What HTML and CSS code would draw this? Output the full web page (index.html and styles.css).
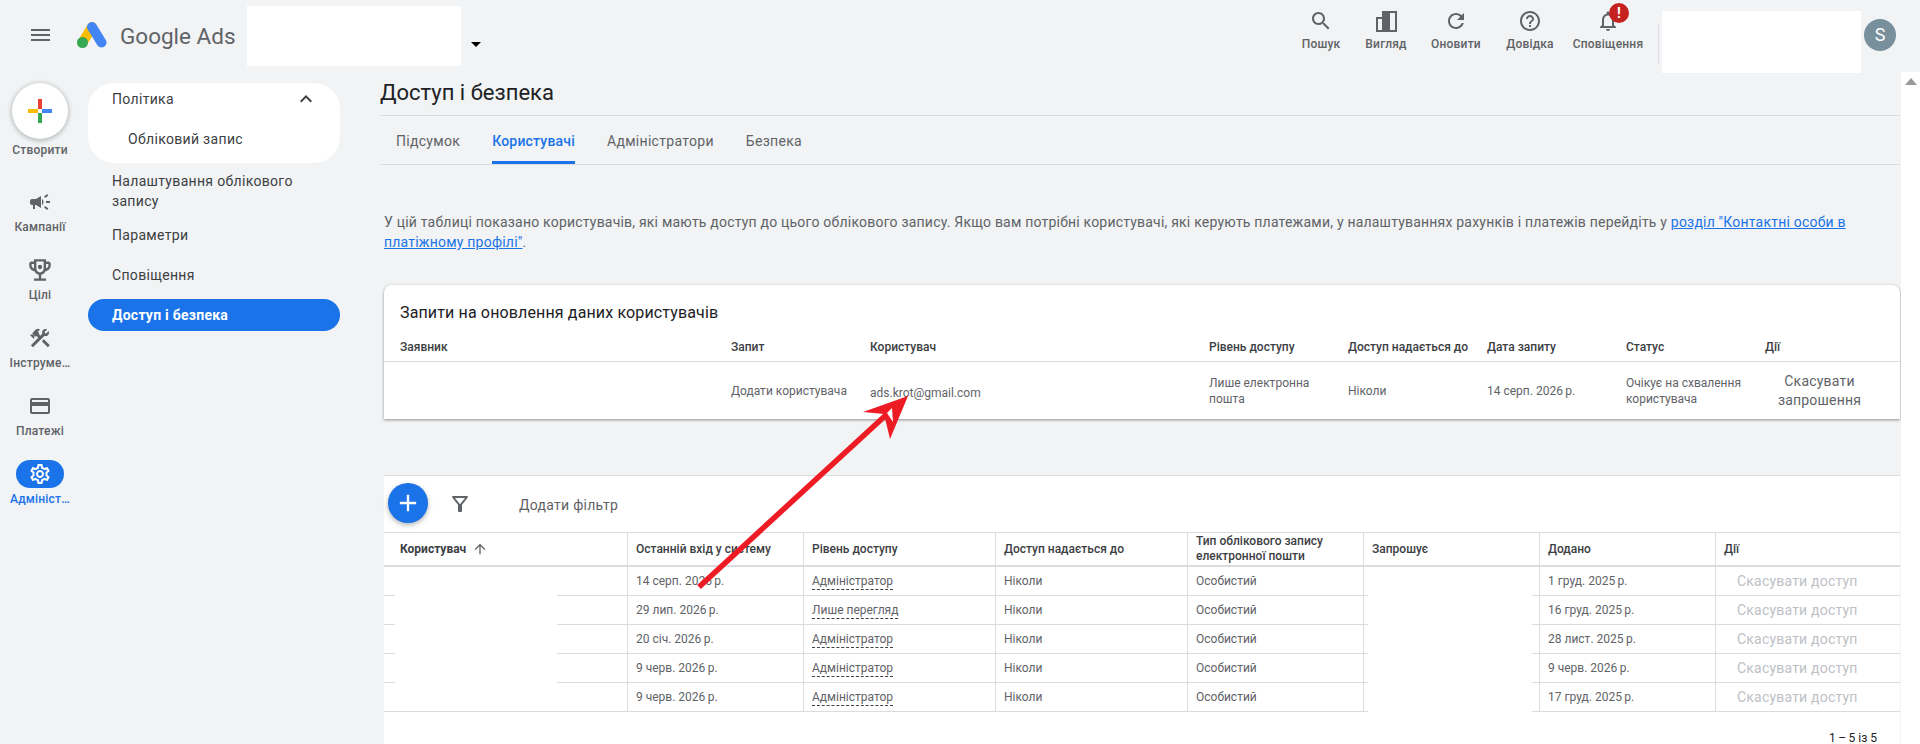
FILE: index.html
```html
<!DOCTYPE html>
<html lang="uk">
<head>
  <meta charset="UTF-8" />
  <title>Доступ і безпека</title>
  <link rel="stylesheet" href="styles.css">
</head>
<body>
  <header class="topbar">
    <svg class="menu-icon" viewBox="0 0 19 12"><path d="M0 0h19v2H0zM0 5h19v2H0zM0 10h19v2H0z"/></svg>
    <svg class="logo" viewBox="0 0 30 27">
      <path d="M15 6L5.5 21.5" stroke="#fbbc04" stroke-width="10" stroke-linecap="round"/>
      <circle cx="5.5" cy="21.5" r="5.5" fill="#34a853"/>
      <path d="M15 6l9.5 15.5" stroke="#4285f4" stroke-width="10" stroke-linecap="round"/>
    </svg>
    <span class="brand">Google Ads</span>
    <div class="redact account-box"></div>
    <span class="caret"></span>
    <div class="tools">
      <div class="tool tool-search">
        <svg viewBox="0 0 24 24"><path d="M15.5 14h-.79l-.28-.27C15.41 12.59 16 11.11 16 9.5 16 5.91 13.09 3 9.5 3S3 5.91 3 9.5 5.91 16 9.5 16c1.61 0 3.09-.59 4.23-1.57l.27.28v.79l5 4.99L20.49 19l-4.99-5zm-6 0C7.01 14 5 11.99 5 9.5S7.01 5 9.5 5 14 7.01 14 9.5 11.99 14 9.5 14z"/></svg>
        <span>Пошук</span>
      </div>
      <div class="tool tool-view">
        <svg viewBox="0 0 24 24"><path d="M2 8h6V2h15v21H2zm2 2v11h4V10zm12-6v17h5V4z"/><path d="M9 4h1v5h5v12H9z"/></svg>
        <span>Вигляд</span>
      </div>
      <div class="tool tool-refresh">
        <svg viewBox="0 0 24 24"><path d="M17.65 6.35C16.2 4.9 14.21 4 12 4c-4.42 0-7.99 3.58-7.99 8s3.57 8 7.99 8c3.73 0 6.84-2.55 7.73-6h-2.08c-.82 2.33-3.04 4-5.65 4-3.31 0-6-2.69-6-6s2.69-6 6-6c1.66 0 3.14.69 4.22 1.78L13 11h7V4l-2.35 2.35z"/></svg>
        <span>Оновити</span>
      </div>
      <div class="tool tool-help">
        <svg viewBox="0 0 24 24"><path d="M11 18h2v-2h-2v2zm1-16C6.48 2 2 6.48 2 12s4.48 10 10 10 10-4.48 10-10S17.52 2 12 2zm0 18c-4.41 0-8-3.59-8-8s3.59-8 8-8 8 3.59 8 8-3.59 8-8 8zm0-14c-2.21 0-4 1.79-4 4h2c0-1.1.9-2 2-2s2 .9 2 2c0 2-3 1.75-3 5h2c0-2.25 3-2.5 3-5 0-2.21-1.79-4-4-4z"/></svg>
        <span>Довідка</span>
      </div>
      <div class="tool tool-bell">
        <svg viewBox="0 0 24 24"><path d="M12 22c1.1 0 2-.9 2-2h-4c0 1.1.9 2 2 2zm6-6v-5c0-3.07-1.63-5.64-4.5-6.32V4c0-.83-.67-1.5-1.5-1.5s-1.5.67-1.5 1.5v.68C7.64 5.36 6 7.92 6 11v5l-2 2v1h16v-1l-2-2zm-2 1H8v-6c0-2.48 1.51-4.5 4-4.5s4 2.02 4 4.5v6z"/></svg>
        <span>Сповіщення</span>
        <b class="badge">!</b>
      </div>
    </div>
    <div class="tool-sep"></div>
    <div class="redact user-box"></div>
    <div class="avatar">S</div>
  </header>

  <div class="layout">
    <nav class="rail">
      <div class="create">
        <div class="create-btn">
          <svg viewBox="0 0 24 24">
            <path d="M10 0h4v10h-4z" fill="#ea4335"/>
            <path d="M14 10h10v4H14z" fill="#4285f4"/>
            <path d="M10 14h4v10h-4z" fill="#34a853"/>
            <path d="M0 10h10v4H0z" fill="#fbbc04"/>
          </svg>
        </div>
        <span>Створити</span>
      </div>
      <div class="rail-item">
        <svg viewBox="0 0 24 24"><path d="M18 11v2h4v-2h-4zm-2 6.61c.96.71 2.21 1.65 3.2 2.39.4-.53.8-1.07 1.2-1.6-.99-.74-2.24-1.68-3.2-2.4-.4.54-.8 1.08-1.2 1.61zM20.4 5.6c-.4-.53-.8-1.07-1.2-1.6-.99.74-2.24 1.68-3.2 2.4.4.53.8 1.07 1.2 1.6.96-.72 2.21-1.65 3.2-2.4zM4 9c-1.1 0-2 .9-2 2v2c0 1.1.9 2 2 2h1v4h2v-4h1l5 3V6L8 9H4zm11.5 3c0-1.33-.58-2.53-1.5-3.35v6.69c.92-.81 1.5-2.01 1.5-3.34z"/></svg>
        <span>Кампанії</span>
      </div>
      <div class="rail-item">
        <svg viewBox="2 2 20 20"><path d="M19 5h-2V3H7v2H5c-1.1 0-2 .9-2 2v1c0 2.55 1.92 4.63 4.39 4.94.63 1.5 1.98 2.63 3.61 2.96V19H7v2h10v-2h-4v-3.1c1.63-.33 2.98-1.46 3.61-2.96C19.08 12.63 21 10.55 21 8V7c0-1.1-.9-2-2-2zM5 8V7h2v3.82C5.84 10.4 5 9.3 5 8zm7 6c-1.65 0-3-1.35-3-3V5h6v6c0 1.65-1.35 3-3 3zm7-6c0 1.3-.84 2.4-2 2.82V7h2v1z"/><circle cx="12" cy="9.5" r="1.8"/></svg>
        <span>Цілі</span>
      </div>
      <div class="rail-item">
        <svg viewBox="0 0 24 24"><path d="M13.78 15.3L19.78 21.3L21.89 19.14L15.89 13.14L13.78 15.3ZM17.5 10.1C17.11 10.1 16.69 10.05 16.36 9.91L4.97 21.25L2.86 19.14L10.27 11.74L8.5 9.96L7.78 10.66L6.33 9.25V12.11L5.63 12.81L2.11 9.25L2.81 8.55H5.62L4.22 7.14L7.78 3.58C8.95 2.41 10.83 2.41 12 3.58L9.89 5.74L11.3 7.14L10.59 7.85L12.38 9.63L14.2 7.75C14.06 7.42 14 7 14 6.63C14 4.66 15.56 3.11 17.5 3.11C18.09 3.11 18.61 3.25 19.08 3.53L16.41 6.2L17.91 7.7L20.58 5.03C20.86 5.5 21 6 21 6.63C21 8.55 19.45 10.1 17.5 10.1Z"/></svg>
        <span>Інструме…</span>
      </div>
      <div class="rail-item">
        <svg viewBox="0 0 24 24"><path d="M20 4H4c-1.11 0-1.99.89-1.99 2L2 18c0 1.11.89 2 2 2h16c1.11 0 2-.89 2-2V6c0-1.11-.89-2-2-2zm0 14H4v-6h16v6zm0-10H4V6h16v2z"/></svg>
        <span>Платежі</span>
      </div>
      <div class="rail-item rail-active">
        <div class="rail-pill">
          <svg viewBox="0 0 24 24"><path d="M19.43 12.98c.04-.32.07-.64.07-.98 0-.34-.03-.66-.07-.98l2.11-1.65c.19-.15.24-.42.12-.64l-2-3.46c-.09-.16-.26-.25-.44-.25-.06 0-.12.01-.17.03l-2.49 1c-.52-.4-1.08-.73-1.69-.98l-.38-2.65C14.46 2.18 14.25 2 14 2h-4c-.25 0-.46.18-.49.42l-.38 2.65c-.61.25-1.17.59-1.69.98l-2.49-1c-.06-.02-.12-.03-.18-.03-.17 0-.34.09-.43.25l-2 3.46c-.13.22-.07.49.12.64l2.11 1.65c-.04.32-.07.65-.07.98 0 .33.03.66.07.98l-2.11 1.65c-.19.15-.24.42-.12.64l2 3.46c.09.16.26.25.44.25.06 0 .12-.01.17-.03l2.49-1c.52.4 1.08.73 1.69.98l.38 2.65c.03.24.24.42.49.42h4c.25 0 .46-.18.49-.42l.38-2.65c.61-.25 1.17-.59 1.69-.98l2.49 1c.06.02.12.03.18.03.17 0 .34-.09.43-.25l2-3.46c.12-.22.07-.49-.12-.64l-2.11-1.65zm-1.98-1.71c.04.31.05.52.05.73 0 .21-.02.43-.05.73l-.14 1.13.89.7 1.08.84-.7 1.21-1.27-.51-1.04-.42-.9.68c-.43.32-.84.56-1.25.73l-1.06.43-.16 1.13-.2 1.35h-1.4l-.19-1.35-.16-1.13-1.06-.43c-.43-.18-.83-.41-1.23-.71l-.91-.7-1.06.43-1.27.51-.7-1.21 1.08-.84.89-.7-.14-1.13c-.03-.31-.05-.54-.05-.74s.02-.43.05-.73l.14-1.13-.89-.7-1.08-.84.7-1.21 1.27.51 1.04.42.9-.68c.43-.32.84-.56 1.25-.73l1.06-.43.16-1.13.2-1.35h1.39l.19 1.35.16 1.13 1.06.43c.43.18.83.41 1.23.71l.91.7 1.06-.43 1.27-.51.7 1.21-1.07.85-.89.7.14 1.13zM12 8c-2.21 0-4 1.79-4 4s1.79 4 4 4 4-1.79 4-4-1.79-4-4-4zm0 6c-1.1 0-2-.9-2-2s.9-2 2-2 2 .9 2 2-.9 2-2 2z"/></svg>
        </div>
        <span>Адмініст…</span>
      </div>
    </nav>

    <aside class="subnav">
      <div class="subnav-group">
        <div class="subnav-row subnav-head">
          Політика
          <svg class="chevron" viewBox="0 0 24 24"><path d="M12 8l-6 6 1.41 1.41L12 10.83l4.59 4.58L18 14z"/></svg>
        </div>
        <div class="subnav-row subnav-child">Обліковий запис</div>
      </div>
      <div class="subnav-row subnav-double">Налаштування облікового запису</div>
      <div class="subnav-row">Параметри</div>
      <div class="subnav-row">Сповіщення</div>
      <div class="subnav-row subnav-active">Доступ і безпека</div>
    </aside>

    <main class="content">
      <h1 class="page-title">Доступ і безпека</h1>
      <div class="tabs">
        <div class="tab">Підсумок</div>
        <div class="tab tab-active">Користувачі</div>
        <div class="tab">Адміністратори</div>
        <div class="tab">Безпека</div>
      </div>

      <p class="intro">У цій таблиці показано користувачів, які мають доступ до цього облікового запису. Якщо вам потрібні користувачі, які керують платежами, у налаштуваннях рахунків і платежів перейдіть у <a href="#">розділ "Контактні особи в платіжному профілі"</a>.</p>

      <section class="card">
        <h2 class="card-title">Запити на оновлення даних користувачів</h2>
        <table class="req-table">
          <thead>
            <tr>
              <th>Заявник</th><th>Запит</th><th>Користувач</th><th>Рівень доступу</th><th>Доступ надається до</th><th>Дата запиту</th><th>Статус</th><th>Дії</th>
            </tr>
          </thead>
          <tbody>
            <tr>
              <td></td>
              <td>Додати користувача</td>
              <td class="email">ads.krot@gmail.com</td>
              <td>Лише електронна пошта</td>
              <td>Ніколи</td>
              <td>14 серп. 2026&thinsp;р.</td>
              <td>Очікує на схвалення користувача</td>
              <td class="req-cancel">Скасувати запрошення</td>
            </tr>
          </tbody>
        </table>
      </section>

      <section class="users">
        <div class="users-bar">
          <div class="fab"><svg viewBox="0 0 24 24"><path d="M19 13h-6v6h-2v-6H5v-2h6V5h2v6h6v2z"/></svg></div>
          <svg class="filter-icon" viewBox="0 0 24 24"><path d="M7 6h10l-5.01 6.3L7 6zm-2.75-.39C6.27 8.2 10 13 10 13v6c0 .55.45 1 1 1h2c.55 0 1-.45 1-1v-6s3.72-4.8 5.74-7.39c.51-.66.04-1.61-.79-1.61H5.04c-.83 0-1.3.95-.79 1.61z"/></svg>
          <span class="add-filter">Додати фільтр</span>
        </div>
        <table class="users-table">
          <thead>
            <tr>
              <th class="user-col">Користувач <svg class="sort-icon" viewBox="0 0 24 24"><path d="M4 12l1.41 1.41L11 7.83V20h2V7.83l5.58 5.59L20 12l-8-8-8 8z"/></svg></th>
              <th>Останній вхід у систему</th><th>Рівень доступу</th><th>Доступ надається до</th><th>Тип облікового запису електронної пошти</th><th>Запрошує</th><th>Додано</th><th>Дії</th>
            </tr>
          </thead>
          <tbody>
            <tr><td></td><td>14 серп. 2026&thinsp;р.</td><td><span class="dashed">Адміністратор</span></td><td>Ніколи</td><td>Особистий</td><td></td><td>1 груд. 2025&thinsp;р.</td><td class="revoke">Скасувати доступ</td></tr>
            <tr><td></td><td>29 лип. 2026&thinsp;р.</td><td><span class="dashed">Лише перегляд</span></td><td>Ніколи</td><td>Особистий</td><td></td><td>16 груд. 2025&thinsp;р.</td><td class="revoke">Скасувати доступ</td></tr>
            <tr><td></td><td>20 січ. 2026&thinsp;р.</td><td><span class="dashed">Адміністратор</span></td><td>Ніколи</td><td>Особистий</td><td></td><td>28 лист. 2025&thinsp;р.</td><td class="revoke">Скасувати доступ</td></tr>
            <tr><td></td><td>9 черв. 2026&thinsp;р.</td><td><span class="dashed">Адміністратор</span></td><td>Ніколи</td><td>Особистий</td><td></td><td>9 черв. 2026&thinsp;р.</td><td class="revoke">Скасувати доступ</td></tr>
            <tr><td></td><td>9 черв. 2026&thinsp;р.</td><td><span class="dashed">Адміністратор</span></td><td>Ніколи</td><td>Особистий</td><td></td><td>17 груд. 2025&thinsp;р.</td><td class="revoke">Скасувати доступ</td></tr>
          </tbody>
        </table>
        <div class="redact mask-user"></div>
        <div class="redact mask-inviter"></div>
        <div class="pager">1&thinsp;–&thinsp;5 із 5</div>
      </section>
    </main>

    <div class="scrollbar"><span class="scroll-up"></span></div>
  </div>

  <!-- red annotation drawn over the screenshot -->
  <svg class="annotation" viewBox="0 0 1920 744">
    <path d="M699 587L886 415" stroke="#ed1c24" stroke-width="5.5" fill="none"/>
    <path d="M908 396L863 412L884 414L890 439z" fill="#ed1c24"/>
    <path d="M892 408L887 413L893 422z" fill="#fff"/>
  </svg>
</body>
</html>
```

FILE: styles.css
```css
* {
  box-sizing: border-box;
}
html, body {
  height: 100%;
}
body {
  margin: 0;
  position: relative;
  overflow: hidden;
  font-family: Roboto, "Liberation Sans", sans-serif;
  font-size: 14px;
  color: #3c4043;
  background: #f1f3f4;
}
svg {
  fill: #5f6368;
  display: block;
}
.redact {
  background: #fff;
}

/* top bar */
.topbar {
  height: 72px;
  display: flex;
  align-items: flex-start;
  position: relative;
}
.menu-icon {
  width: 19px;
  height: 12px;
  margin: 29px 0 0 31px;
}
.logo {
  width: 30px;
  height: 27px;
  margin: 21px 0 0 27px;
  fill: none;
}
.brand {
  margin: 20px 0 0 13px;
  width: 127px;
  font-size: 22.5px;
  line-height: 32px;
  color: #5f6368;
  white-space: nowrap;
}
.account-box {
  width: 214px;
  height: 60px;
  margin-top: 6px;
}
.caret {
  margin: 42px 0 0 10px;
  border-left: 5px solid transparent;
  border-right: 5px solid transparent;
  border-top: 5px solid #000;
}
.tools {
  margin-left: auto;
  display: flex;
  height: 72px;
}
.tool {
  position: relative;
  padding-top: 9px;
  display: flex;
  flex-direction: column;
  align-items: center;
  font-size: 12px;
  font-weight: 500;
  letter-spacing: 0.2px;
  line-height: 16px;
  color: #5f6368;
  white-space: nowrap;
}
.tool svg {
  width: 24px;
  height: 24px;
  margin-bottom: 3px;
}
.tool-search { width: 62px; }
.tool-view { width: 68px; }
.tool-refresh { width: 72px; }
.tool-help { width: 76px; }
.tool-bell { width: 80px; }
.badge {
  position: absolute;
  left: 41px;
  top: 3px;
  width: 20px;
  height: 20px;
  border-radius: 50%;
  background: #c5221f;
  color: #fff;
  font-size: 14px;
  line-height: 20px;
  text-align: center;
}
.tool-sep {
  width: 1px;
  height: 40px;
  margin: 24px 3px 0 10px;
  background: #dadce0;
}
.user-box {
  width: 199px;
  height: 62px;
  margin-top: 11px;
}
.avatar {
  width: 32px;
  height: 32px;
  margin: 19px 24px 0 3px;
  border-radius: 50%;
  background: #78909c;
  color: #fff;
  font-size: 18px;
  line-height: 32px;
  text-align: center;
}

/* page columns */
.layout {
  display: flex;
  height: 672px;
}

/* icon rail */
.rail {
  width: 88px;
  flex-shrink: 0;
  padding: 11px 8px 0 0;
  display: flex;
  flex-direction: column;
  align-items: center;
  font-size: 12px;
  font-weight: 500;
  letter-spacing: 0.2px;
  line-height: 16px;
  color: #5f6368;
}
.create {
  width: 82px;
  display: flex;
  flex-direction: column;
  align-items: center;
  margin-bottom: 32px;
}
.create-btn {
  width: 56px;
  height: 56px;
  margin-bottom: 3px;
  border-radius: 50%;
  background: #fff;
  box-shadow: 0 1px 4px 1px rgba(60, 64, 67, 0.3);
  display: flex;
  align-items: center;
  justify-content: center;
}
.create-btn svg {
  width: 24px;
  height: 24px;
}
.rail-item {
  height: 68px;
  display: flex;
  flex-direction: column;
  align-items: center;
  white-space: nowrap;
}
.rail-item svg {
  width: 24px;
  height: 24px;
  margin-bottom: 5px;
}
.rail-active {
  color: #1a73e8;
  margin-top: -2px;
}
.rail-pill {
  width: 48px;
  height: 28px;
  margin-bottom: 3px;
  border-radius: 14px;
  background: #1a73e8;
  display: flex;
  align-items: center;
  justify-content: center;
}
.rail-pill svg {
  margin: 0;
  fill: #fff;
}

/* second level menu */
.subnav {
  width: 252px;
  flex-shrink: 0;
  padding-top: 11px;
  display: flex;
  flex-direction: column;
  gap: 8px;
  color: #3c4043;
}
.subnav-group {
  background: #fff;
  border-radius: 26px;
  height: 80px;
  display: flex;
  flex-direction: column;
  gap: 8px;
}
.subnav-row {
  min-height: 32px;
  padding: 0 24px;
  display: flex;
  align-items: center;
  justify-content: space-between;
  letter-spacing: 0.32px;
}
.subnav-child {
  padding-left: 40px;
}
.subnav-double {
  line-height: 20px;
}
.chevron {
  width: 24px;
  height: 24px;
  margin-right: -2px;
  fill: #3c4043;
}
.subnav-active {
  background: #1a73e8;
  border-radius: 16px;
  color: #fff;
  font-weight: 700;
  letter-spacing: 0.25px;
}

/* main column */
.content {
  flex: 1;
  min-width: 0;
  margin-left: 40px;
}
.page-title {
  margin: 0;
  height: 44px;
  padding-top: 7px;
  border-bottom: 1px solid #dadce0;
  font-size: 22px;
  font-weight: 400;
  line-height: 28px;
  color: #202124;
}
.tabs {
  display: flex;
  height: 49px;
  border-bottom: 1px solid #dadce0;
  letter-spacing: 0.3px;
  color: #5f6368;
}
.tab {
  margin-right: 32px;
  height: 48px;
  line-height: 50px;
}
.tab:first-child {
  margin-left: 16px;
}
.tab-active {
  color: #1a73e8;
  font-weight: 500;
  letter-spacing: 0.2px;
  border-bottom: 3px solid #1a73e8;
}
.intro {
  margin: 47px 4px 0;
  width: 1510px;
  height: 40px;
  line-height: 20px;
  letter-spacing: 0.205px;
  color: #5f6368;
}
.intro a {
  color: #1a73e8;
}

/* requests card */
.card {
  margin: 33px 0 0 4px;
  height: 134px;
  background: #fff;
  border-radius: 8px 8px 0 0;
  box-shadow: 0 1px 3px rgba(60, 64, 67, 0.55);
}
.card-title {
  margin: 0;
  padding: 16px 16px 0;
  height: 48px;
  font-size: 16px;
  font-weight: 400;
  letter-spacing: 0.14px;
  line-height: 24px;
  color: #202124;
}
.req-table {
  width: 100%;
  table-layout: fixed;
  border-collapse: separate;
  border-spacing: 0;
  font-size: 12px;
  line-height: 16px;
  color: #5f6368;
}
.req-table th {
  height: 29px;
  padding: 0 0 1px;
  border-bottom: 1px solid #dadce0;
  font-weight: 500;
  text-align: left;
  color: #3c4043;
}
.req-table td {
  height: 57px;
  padding: 0 8px 0 0;
}
.req-table th:nth-child(1) { width: 347px; padding-left: 16px; }
.req-table th:nth-child(2) { width: 139px; }
.req-table th:nth-child(3) { width: 339px; }
.req-table th:nth-child(4) { width: 139px; }
.req-table th:nth-child(5) { width: 139px; }
.req-table th:nth-child(6) { width: 139px; }
.req-table th:nth-child(7) { width: 139px; }
.req-table td.email {
  padding-top: 4px;
}
.req-table td.req-cancel {
  padding: 0 26px 0 0;
  font-size: 14px;
  letter-spacing: 0.2px;
  line-height: 19px;
  text-align: center;
}

/* users table */
.users {
  position: relative;
  margin: 56px 0 0 4px;
  height: 269px;
  background: #fff;
  border-top: 1px solid #dadce0;
}
.users-bar {
  height: 56px;
  padding: 7px 0 0 4px;
  display: flex;
  align-items: flex-start;
}
.fab {
  width: 40px;
  height: 40px;
  border-radius: 50%;
  background: #1a73e8;
  box-shadow: 0 2px 5px rgba(60, 64, 67, 0.4);
  display: flex;
  align-items: center;
  justify-content: center;
}
.fab svg {
  width: 28px;
  height: 28px;
  fill: #fff;
}
.filter-icon {
  width: 24px;
  height: 24px;
  margin: 9px 0 0 20px;
}
.add-filter {
  margin: 12px 0 0 47px;
  line-height: 20px;
  letter-spacing: 0.27px;
  color: #5f6368;
}
.users-table {
  width: 100%;
  table-layout: fixed;
  border-collapse: separate;
  border-spacing: 0;
  border-top: 1px solid #dadce0;
  font-size: 12px;
  line-height: 15px;
  color: #5f6368;
}
.users-table th {
  height: 34px;
  padding: 0 8px;
  border-right: 1px solid #dadce0;
  border-bottom: 2px solid #dadce0;
  font-weight: 500;
  text-align: left;
  color: #3c4043;
}
.users-table td {
  height: 29px;
  padding: 0 8px;
  border-right: 1px solid #dadce0;
  border-bottom: 1px solid #dadce0;
}
.users-table th:last-child,
.users-table td:last-child {
  border-right: 0;
}
.users-table th:nth-child(1) { width: 244px; padding-left: 16px; font-weight: 700; }
.users-table th:nth-child(2) { width: 176px; }
.users-table th:nth-child(3) { width: 192px; }
.users-table th:nth-child(4) { width: 192px; }
.users-table th:nth-child(5) { width: 176px; }
.users-table th:nth-child(6) { width: 176px; }
.users-table th:nth-child(7) { width: 176px; }
.sort-icon {
  display: inline-block;
  width: 16px;
  height: 16px;
  margin: 0 0 -4px 3px;
}
.dashed {
  padding-bottom: 1px;
  border-bottom: 1px dashed #3c4043;
}
.users-table td.revoke {
  padding-left: 21px;
  font-size: 14px;
  letter-spacing: 0.2px;
  color: #bdc1c6;
}
.mask-user {
  position: absolute;
  left: 11px;
  top: 95px;
  width: 162px;
  height: 120px;
}
.mask-inviter {
  position: absolute;
  left: 984px;
  top: 93px;
  width: 164px;
  height: 148px;
}
.pager {
  position: absolute;
  right: 23px;
  top: 254px;
  font-size: 12px;
  line-height: 16px;
  color: #202124;
}

/* page scrollbar */
.scrollbar {
  width: 19px;
  margin-left: 1px;
  flex-shrink: 0;
  background: #fff;
}
.scroll-up {
  display: block;
  margin: 6px auto 0;
  width: 0;
  border-left: 6px solid transparent;
  border-right: 6px solid transparent;
  border-bottom: 7px solid #999;
}

.annotation {
  position: absolute;
  left: 0;
  top: 0;
  width: 1920px;
  height: 744px;
  fill: none;
  pointer-events: none;
}
```
